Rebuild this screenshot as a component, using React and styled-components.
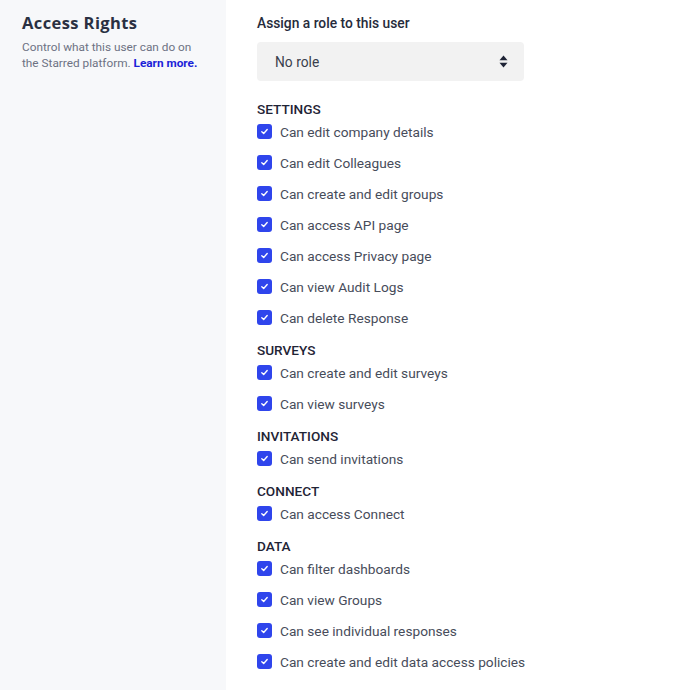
import React from "react";
import styled, { createGlobalStyle } from "styled-components";

const GlobalStyle = createGlobalStyle`
  body {
    margin: 0;
    background: #ffffff;
    font-family: Roboto, "Liberation Sans", sans-serif;
  }
`;

const Page = styled.div`
  display: flex;
  width: 680px;
  min-height: 690px;
`;

const Sidebar = styled.aside`
  width: 226px;
  flex-shrink: 0;
  background: #f7f8fa;
  padding: 13px 22px 0;
  box-sizing: border-box;
`;

const Title = styled.h2`
  margin: 0;
  font-family: "Open Sans", sans-serif;
  font-weight: 700;
  font-size: 16.5px;
  letter-spacing: 0.4px;
  line-height: 20px;
  color: #2a3042;
`;

const Description = styled.p`
  margin: 6px 0 0;
  font-size: 11.8px;
  line-height: 16px;
  color: #6d7283;

  a {
    color: #1b22d8;
    font-weight: 700;
    text-decoration: none;
  }
`;

const Main = styled.main`
  flex: 1;
  padding: 14px 0 0 31px;
`;

const Label = styled.div`
  font-size: 13.8px;
  font-weight: 500;
  line-height: 18px;
  color: #262b3b;
`;

const Select = styled.div`
  margin-top: 10px;
  width: 267px;
  height: 39px;
  border-radius: 4px;
  background: #f2f2f2;
  display: flex;
  align-items: center;
  justify-content: space-between;
  padding: 0 16px 0 18px;
  box-sizing: border-box;
  font-size: 13.8px;
  color: #3a3f4d;
`;

const Section = styled.section`
  margin-top: ${(p) => (p.first ? "19px" : "8px")};
`;

const Heading = styled.h3`
  margin: 0;
  font-size: 13.6px;
  font-weight: 500;
  line-height: 18px;
  color: #1f2436;
`;

const List = styled.ul`
  list-style: none;
  margin: 0;
  padding: 0;
`;

const Item = styled.li`
  display: flex;
  align-items: center;
  gap: 8px;
  height: 31px;
  margin-top: ${(p) => (p.first ? "-2px" : "0")};
  font-size: 13.7px;
  color: #474c5a;
`;

const Box = styled.span`
  width: 15px;
  height: 15px;
  border-radius: 3px;
  background: #2f45ec;
  display: flex;
  align-items: center;
  justify-content: center;
  flex-shrink: 0;
`;

const Check = () => (
  <Box>
    <svg width="9" height="9" viewBox="0 0 10 10" fill="none">
      <path d="M2 5.2 L4.1 7.2 L8 2.8" stroke="#fff" strokeWidth="1.5" strokeLinecap="round" strokeLinejoin="round" />
    </svg>
  </Box>
);

const SortArrows = () => (
  <svg width="9" height="13" viewBox="0 0 9 13">
    <path d="M4.5 0.5 L8.5 5.3 L0.5 5.3 Z" fill="#1f2436" />
    <path d="M4.5 12.5 L8.5 7.7 L0.5 7.7 Z" fill="#1f2436" />
  </svg>
);

const sections = [
  {
    title: "SETTINGS",
    items: [
      "Can edit company details",
      "Can edit Colleagues",
      "Can create and edit groups",
      "Can access API page",
      "Can access Privacy page",
      "Can view Audit Logs",
      "Can delete Response",
    ],
  },
  { title: "SURVEYS", items: ["Can create and edit surveys", "Can view surveys"] },
  { title: "INVITATIONS", items: ["Can send invitations"] },
  { title: "CONNECT", items: ["Can access Connect"] },
  {
    title: "DATA",
    items: [
      "Can filter dashboards",
      "Can view Groups",
      "Can see individual responses",
      "Can create and edit data access policies",
    ],
  },
];

export default function App() {
  return (
    <>
      <GlobalStyle />
      <Page>
        <Sidebar>
          <Title>Access Rights</Title>
          <Description>
            Control what this user can do on the Starred platform.{" "}
            <a href="#">Learn more.</a>
          </Description>
        </Sidebar>
        <Main>
          <Label>Assign a role to this user</Label>
          <Select>
            <span>No role</span>
            <SortArrows />
          </Select>
          {sections.map((s, i) => (
            <Section key={s.title} first={i === 0}>
              <Heading>{s.title}</Heading>
              <List>
                {s.items.map((item, j) => (
                  <Item key={item} first={j === 0}>
                    <Check />
                    {item}
                  </Item>
                ))}
              </List>
            </Section>
          ))}
        </Main>
      </Page>
    </>
  );
}
